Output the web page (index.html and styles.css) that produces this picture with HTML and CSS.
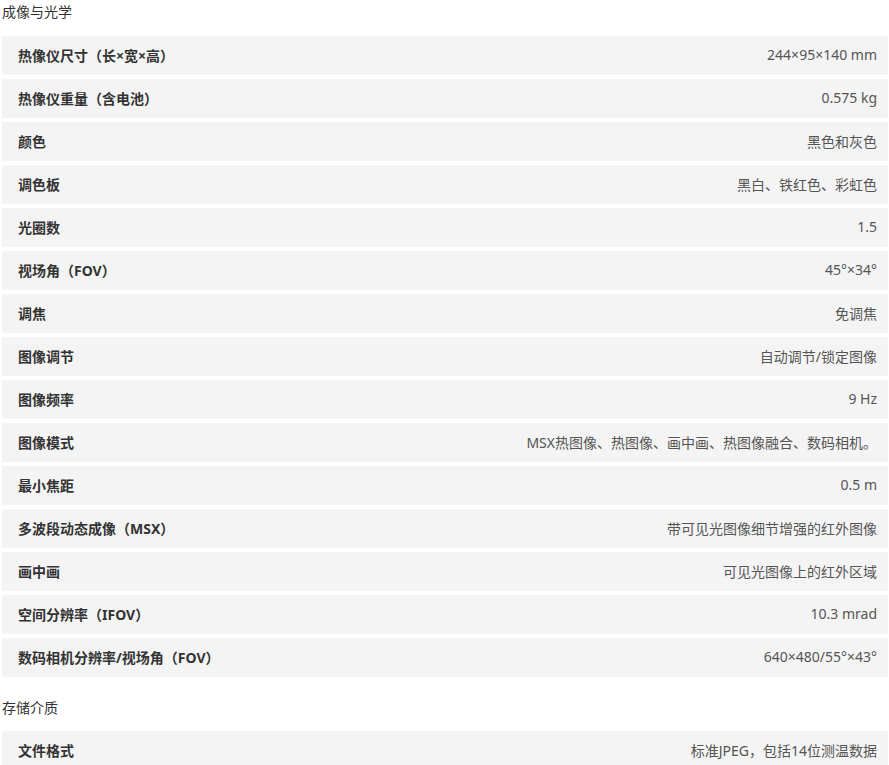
FILE: index.html
```html
<!DOCTYPE html>
<html lang="zh-CN">
<head>
<meta charset="utf-8">
<title>规格</title>
<link rel="stylesheet" href="styles.css">
</head>
<body>
<div class="page">
  <h3 class="sec-title">成像与光学</h3>
  <div class="specs">
    <div class="row"><span class="label">热像仪尺寸（长×宽×高）</span><span class="value">244×95×140 mm</span></div>
    <div class="row"><span class="label">热像仪重量（含电池）</span><span class="value">0.575 kg</span></div>
    <div class="row"><span class="label">颜色</span><span class="value">黑色和灰色</span></div>
    <div class="row"><span class="label">调色板</span><span class="value">黑白、铁红色、彩虹色</span></div>
    <div class="row"><span class="label">光圈数</span><span class="value">1.5</span></div>
    <div class="row"><span class="label">视场角（FOV）</span><span class="value">45°×34°</span></div>
    <div class="row"><span class="label">调焦</span><span class="value">免调焦</span></div>
    <div class="row"><span class="label">图像调节</span><span class="value">自动调节/锁定图像</span></div>
    <div class="row"><span class="label">图像频率</span><span class="value">9 Hz</span></div>
    <div class="row"><span class="label">图像模式</span><span class="value">MSX热图像、热图像、画中画、热图像融合、数码相机。</span></div>
    <div class="row"><span class="label">最小焦距</span><span class="value">0.5 m</span></div>
    <div class="row"><span class="label">多波段动态成像（MSX）</span><span class="value">带可见光图像细节增强的红外图像</span></div>
    <div class="row"><span class="label">画中画</span><span class="value">可见光图像上的红外区域</span></div>
    <div class="row"><span class="label">空间分辨率（IFOV）</span><span class="value">10.3 mrad</span></div>
    <div class="row"><span class="label">数码相机分辨率/视场角（FOV）</span><span class="value">640×480/55°×43°</span></div>
  </div>
  <h3 class="sec-title sec-title--next">存储介质</h3>
  <div class="specs">
    <div class="row"><span class="label">文件格式</span><span class="value">标准JPEG，包括14位测温数据</span></div>
  </div>
</div>
</body>
</html>
```
FILE: styles.css
```css
html, body {
  margin: 0;
  padding: 0;
  background: #ffffff;
}
body {
  font-family: "Noto Sans", "Noto Sans CJK SC", sans-serif;
  font-size: 14px;
  color: #333333;
}
.page {
  margin-left: 2px;
  width: 886px;
}
.sec-title {
  margin: 0 0 12px 0;
  padding-bottom: 1px;
  height: 23px;
  font-size: 14px;
  font-weight: normal;
  line-height: 23px;
  color: #333333;
}
.sec-title--next {
  margin-top: 19px;
  margin-bottom: 11px;
}
.specs {
  display: flex;
  flex-direction: column;
  gap: 4px;
}
.row {
  display: flex;
  justify-content: space-between;
  align-items: center;
  height: 37px;
  padding: 0 11px 2px 16px;
  background: #f4f4f4;
}
.label {
  font-weight: bold;
  color: #333333;
}
.value {
  color: #555555;
  text-align: right;
}
```
